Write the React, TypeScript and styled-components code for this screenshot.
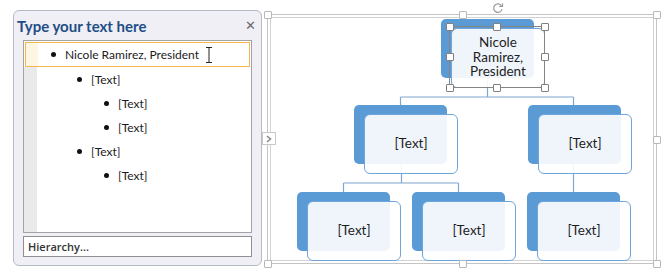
import * as React from 'react';
import styled, { createGlobalStyle } from 'styled-components';

const GlobalStyle = createGlobalStyle`
    body {
        margin: 0;
        background: #ffffff;
        font-family: Lato, "Liberation Sans", sans-serif;
    }
`

const Page = styled.div`
    display: flex;
    align-items: flex-start;
    width: 665px;
    height: 274px;
    overflow: hidden;
`

// ---- text pane ----

const Pane = styled.div`
    margin: 10px 0 0 13px;
    width: 249px;
    height: 256px;
    box-sizing: border-box;
    border: 1px solid #b4bcc6;
    border-radius: 6px;
    background: #efeff5;
    padding: 0 9px 0 9px;
    display: flex;
    flex-direction: column;
`

const PaneHead = styled.div`
    height: 29px;
    display: flex;
    align-items: center;
    justify-content: space-between;
    margin-left: -6px;
    margin-right: -4px;
`

const PaneTitle = styled.div`
    font-size: 15px;
    font-weight: bold;
    color: #1f4e86;
`

const Close = styled.div`
    font-family: "DejaVu Sans", sans-serif;
    font-size: 13px;
    font-weight: bold;
    color: #6a6a6a;
`

const TextArea = styled.div`
    height: 193px;
    box-sizing: border-box;
    border: 1px solid #a3a3a3;
    background: #ffffff;
    display: flex;
    flex-direction: column;
    position: relative;
`

const Strip = styled.div`
    position: absolute;
    left: 0;
    top: 26px;
    bottom: 0;
    width: 13px;
    background: #eaeaea;
`

const Row = styled.div<{ $level: number; $active?: boolean }>`
    position: relative;
    height: 24px;
    display: flex;
    align-items: center;
    box-sizing: border-box;
    padding-left: ${p => p.$level * 27 - 1}px;
    font-size: 12px;
    color: #1c1c24;
    ${p => p.$active && `
        margin: 1px 1px 0 1px;
        height: 25px;
        padding-left: ${p.$level * 27 - 2}px;
        border: 1px solid #f5b54f;
        background: linear-gradient(to right, #fcf6e3 0 12px, #ffffff 12px);
    `}
`

const Bullet = styled.span`
    width: 5px;
    height: 5px;
    border-radius: 50%;
    background: #111;
    margin-right: 9px;
`

const Cursor = styled.svg`
    position: absolute;
    left: 179px;
    top: 4px;
`

const Footer = styled.div`
    margin-top: 3px;
    height: 21px;
    box-sizing: border-box;
    border: 1px solid #909090;
    background: #fff;
    display: flex;
    align-items: center;
    padding-left: 4px;
    font-family: "Open Sans", sans-serif;
    font-size: 11px;
    font-weight: 600;
    color: #333;
`

// ---- diagram frame ----

const Frame = styled.div`
    position: relative;
    margin: 14px 0 0 5px;
    width: 390px;
    height: 250px;
    box-sizing: border-box;
    border: 1px solid #c4c4c4;
`

const FrameInner = styled.div`
    position: absolute;
    inset: 2px;
    border: 1px solid #d2d2d2;
`

const Handle = styled.div<{ $x: number; $y: number; $dark?: boolean }>`
    position: absolute;
    left: ${p => p.$x}px;
    top: ${p => p.$y}px;
    width: 6px;
    height: 6px;
    background: #fff;
    border: 1px solid ${p => p.$dark ? '#808080' : '#b8b8b8'};
    border-radius: 1px;
    z-index: 5;
`

const Expand = styled.div`
    position: absolute;
    left: -6px;
    top: 117px;
    width: 14px;
    height: 13px;
    box-sizing: border-box;
    background: #fff;
    border: 1px solid #c8c8c8;
    display: flex;
    align-items: center;
    justify-content: center;
    z-index: 6;
`

const Back = styled.div<{ $x: number; $y: number }>`
    position: absolute;
    left: ${p => p.$x}px;
    top: ${p => p.$y}px;
    width: 93px;
    height: 59px;
    border-radius: 5px;
    background: #5b9bd5;
`

const Front = styled.div<{ $x: number; $y: number }>`
    position: absolute;
    left: ${p => p.$x}px;
    top: ${p => p.$y}px;
    width: 94px;
    height: 60px;
    box-sizing: border-box;
    padding-bottom: 2px;
    border: 1px solid #6ea5da;
    border-radius: 6px;
    background: rgba(255, 255, 255, 0.9);
    display: flex;
    align-items: center;
    justify-content: center;
    text-align: center;
    font-size: 13.5px;
    line-height: 14.5px;
    color: #1e1e1e;
`

const Label = styled.span`
    white-space: pre-line;
`

const Selection = styled.div`
    position: absolute;
    left: 181px;
    top: 11px;
    width: 96px;
    height: 62px;
    box-sizing: border-box;
    border: 1px solid #858585;
    z-index: 4;
`

const Lines = styled.svg`
    position: absolute;
    left: 0;
    top: 0;
`

const Rotate = styled.svg`
    position: absolute;
    left: 224px;
    top: -13px;
    z-index: 6;
`

const nodes = [
    { x: 173, y: 4, label: 'Nicole\nRamirez,\nPresident' },
    { x: 86, y: 90, label: '[Text]' },
    { x: 260, y: 90, label: '[Text]' },
    { x: 29, y: 177, label: '[Text]' },
    { x: 144, y: 177, label: '[Text]' },
    { x: 259, y: 177, label: '[Text]' },
]

const rows = [
    { level: 1, text: 'Nicole Ramirez, President', active: true },
    { level: 2, text: '[Text]' },
    { level: 3, text: '[Text]' },
    { level: 3, text: '[Text]' },
    { level: 2, text: '[Text]' },
    { level: 3, text: '[Text]' },
]

export default function App() {
    const fw = 390, fh = 250;
    const frameHandles = [
        [-4, -4], [fw / 2 - 4, -4], [fw - 5, -4],
        [-4, fh / 2 - 4], [fw - 5, fh / 2 - 4],
        [-4, fh - 5], [fw / 2 - 4, fh - 5], [fw - 5, fh - 5],
    ]
    const sx = 181, sy = 11, sw = 96, sh = 62;
    const selHandles = [
        [sx - 3, sy - 3], [sx + sw / 2 - 4, sy - 3], [sx + sw - 4, sy - 3],
        [sx - 3, sy + sh / 2 - 4], [sx + sw - 4, sy + sh / 2 - 4],
        [sx - 3, sy + sh - 4], [sx + sw / 2 - 4, sy + sh - 4], [sx + sw - 4, sy + sh - 4],
    ]
    return (
        <>
            <GlobalStyle />
            <Page>
                <Pane>
                    <PaneHead>
                        <PaneTitle>Type your text here</PaneTitle>
                        <Close>✕</Close>
                    </PaneHead>
                    <TextArea>
                        <Strip />
                        {rows.map((r, i) => (
                            <Row key={i} $level={r.level} $active={r.active}>
                                <Bullet />
                                {r.text}
                                {r.active && (
                                    <Cursor width="8" height="16" viewBox="0 0 8 16">
                                        <path d="M1 0.5h6M4 0.5v15M1 15.5h6" stroke="#222" strokeWidth="1" fill="none" />
                                    </Cursor>
                                )}
                            </Row>
                        ))}
                    </TextArea>
                    <Footer>Hierarchy...</Footer>
                </Pane>

                <Frame>
                    <FrameInner />
                    {frameHandles.map(([x, y], i) => <Handle key={i} $x={x} $y={y} />)}
                    <Expand>
                        <svg width="6" height="8" viewBox="0 0 6 8">
                            <path d="M1 1l3.5 3L1 7" stroke="#8a8a8a" strokeWidth="1.6" fill="none" />
                        </svg>
                    </Expand>
                    <Rotate width="12" height="12" viewBox="0 0 12 12">
                        <path d="M9.5 4A4.2 4.2 0 1 0 10 7" stroke="#9a9a9a" strokeWidth="1.2" fill="none" />
                        <path d="M10.5 1.2v3.3H7.2" stroke="#9a9a9a" strokeWidth="1.2" fill="none" />
                    </Rotate>
                    <Lines width={fw} height={fh}>
                        <g stroke="#7ea7d2" strokeWidth="1.2" fill="none">
                            <path d="M219.5 61v21M132.5 82h173M132.5 82v8M305.5 82v8" />
                            <path d="M133.5 149v19M75.5 168h115M75.5 168v9M190.5 168v9" />
                            <path d="M305.5 149v28" />
                        </g>
                    </Lines>
                    {nodes.map((n, i) => <Back key={i} $x={n.x} $y={n.y} />)}
                    {nodes.map((n, i) => (
                        <Front key={i} $x={n.x + 10} $y={n.y + 9}>
                            <Label>{n.label}</Label>
                        </Front>
                    ))}
                    <Selection />
                    {selHandles.map(([x, y], i) => <Handle key={i} $x={x} $y={y} $dark />)}
                </Frame>
            </Page>
        </>
    )
}
